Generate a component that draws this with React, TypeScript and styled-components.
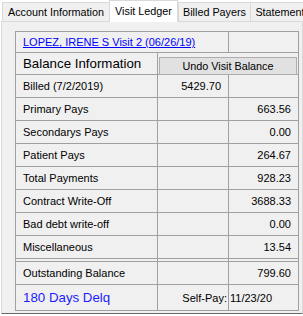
import { Fragment } from 'react'
import styled, { createGlobalStyle } from 'styled-components'

const GlobalStyle = createGlobalStyle`
  html, body {
    margin: 0;
    padding: 0;
    background: #ffffff;
  }
  body {
    font-family: 'Liberation Sans', Arial, sans-serif;
    color: #000;
  }
`

const Window = styled.div`
  width: 303px;
  height: 316px;
  padding-left: 1px;
  box-sizing: border-box;
  overflow: hidden;
`

const TabStrip = styled.div`
  display: flex;
  align-items: flex-end;
  height: 21px;
  padding-left: 1px;
  position: relative;
  z-index: 1;
`

const Tab = styled.div<{ $active?: boolean; $width: number }>`
  flex: none;
  width: ${(p) => p.$width}px;
  height: ${(p) => (p.$active ? 22 : 19)}px;
  margin-bottom: ${(p) => (p.$active ? -1 : 0)}px;
  box-sizing: border-box;
  display: flex;
  align-items: center;
  justify-content: center;
  padding-bottom: ${(p) => (p.$active ? 2 : 0)}px;
  background: ${(p) => (p.$active ? '#ffffff' : '#f0f0f0')};
  border: 1px solid #d9d9d9;
  border-bottom: none;
  margin-right: ${(p) => (p.$active ? 0 : -1)}px;
  font-size: 10.8px;
  white-space: nowrap;
  overflow: hidden;
  color: #000;
`

const Panel = styled.div`
  width: 302px;
  box-sizing: border-box;
  background: #f0f0f0;
  border: 1px solid #d9d9d9;
  border-bottom: 1px solid #696969;
  padding: 9px 3px 2px 13px;
`

const Ledger = styled.div`
  display: grid;
  grid-template-columns: 141px 70px 69px;
  grid-template-rows: 20px 21px repeat(8, 22px) 2px 22px 25px;
  gap: 1px;
  width: 284px;
  box-sizing: border-box;
  border: 1px solid #a0a0a0;
  background: #a0a0a0;
`

const Cell = styled.div<{ $span?: number; $align?: 'left' | 'right' }>`
  grid-column: span ${(p) => p.$span ?? 1};
  background: #f0f0f0;
  display: flex;
  align-items: center;
  justify-content: ${(p) => (p.$align === 'right' ? 'flex-end' : 'flex-start')};
  padding: ${(p) => (p.$align === 'right' ? '0 7px 0 0' : '0 0 0 7px')};
  font-size: 11px;
  white-space: nowrap;
  overflow: hidden;
`

const DateCell = styled(Cell)`
  padding: 0 0 0 1px;
`

const SelfPayCell = styled(Cell)`
  padding: 0 1px 0 0;
`

const ButtonCell = styled.div`
  grid-column: span 2;
  background: #f0f0f0;
  padding: 3px 1px 0 1px;
`

const VisitLink = styled.a`
  color: #0000ff;
  text-decoration: underline;
  font-size: 11px;
  cursor: pointer;
`

const SectionTitle = styled.span<{ $color?: string }>`
  font-size: 13.3px;
  color: ${(p) => p.$color ?? '#000'};
`

const UndoButton = styled.button`
  width: 100%;
  height: 18px;
  box-sizing: border-box;
  margin: 0;
  padding: 0;
  background: #e1e1e1;
  border: 1px solid #adadad;
  font-family: 'Liberation Sans', Arial, sans-serif;
  font-size: 10.8px;
  color: #000;
  line-height: 16px;
`

const rows: { label: string; billed?: string; amount?: string }[] = [
  { label: 'Billed (7/2/2019)', billed: '5429.70' },
  { label: 'Primary Pays', amount: '663.56' },
  { label: 'Secondarys Pays', amount: '0.00' },
  { label: 'Patient Pays', amount: '264.67' },
  { label: 'Total Payments', amount: '928.23' },
  { label: 'Contract Write-Off', amount: '3688.33' },
  { label: 'Bad debt write-off', amount: '0.00' },
  { label: 'Miscellaneous', amount: '13.54' },
]

const App = () => {
  return (
    <>
      <GlobalStyle />
      <Window>
        <TabStrip>
          <Tab $width={108}>Account Information</Tab>
          <Tab $width={69} $active>
            Visit Ledger
          </Tab>
          <Tab $width={73}>Billed Payers</Tab>
          <Tab $width={60}>Statement</Tab>
        </TabStrip>
        <Panel>
          <Ledger>
            <Cell $span={2}>
              <VisitLink>LOPEZ, IRENE S Visit 2 (06/26/19)</VisitLink>
            </Cell>
            <Cell />

            <Cell>
              <SectionTitle>Balance Information</SectionTitle>
            </Cell>
            <ButtonCell>
              <UndoButton>Undo Visit Balance</UndoButton>
            </ButtonCell>

            {rows.map((r) => (
              <Fragment key={r.label}>
                <Cell>{r.label}</Cell>
                <Cell $align="right">{r.billed}</Cell>
                <Cell $align="right">{r.amount}</Cell>
              </Fragment>
            ))}

            <Cell />
            <Cell />
            <Cell />

            <Cell>Outstanding Balance</Cell>
            <Cell />
            <Cell $align="right">799.60</Cell>

            <Cell>
              <SectionTitle $color="#1c1cff">180 Days Delq</SectionTitle>
            </Cell>
            <SelfPayCell $align="right">Self-Pay:</SelfPayCell>
            <DateCell>11/23/20</DateCell>
          </Ledger>
        </Panel>
      </Window>
    </>
  )
}

export default App
